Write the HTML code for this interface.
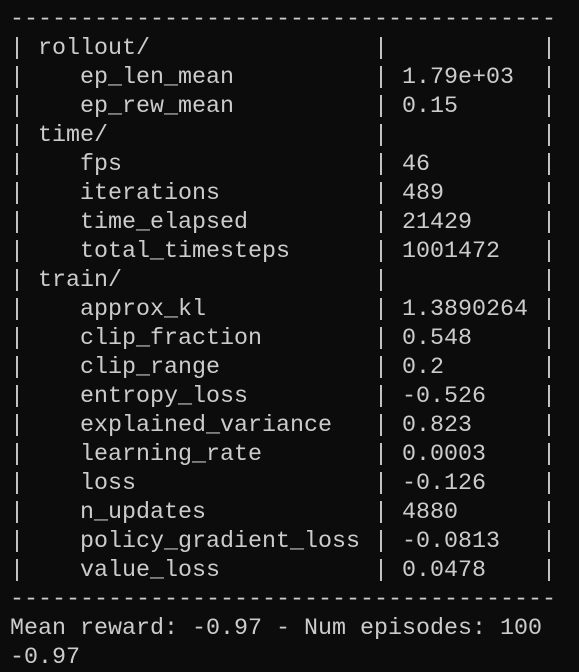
<!DOCTYPE html>
<html><head><style>
html,body{margin:0;padding:0;background:#0c0c0c;width:579px;height:672px;overflow:hidden}
pre{margin:0;padding:6px 0 0 10px;font-family:"Liberation Mono",monospace;font-size:23.33px;line-height:29px;color:#cccccc}
</style></head><body><pre>---------------------------------------
| rollout/                |           |
|    ep_len_mean          | 1.79e+03  |
|    ep_rew_mean          | 0.15      |
| time/                   |           |
|    fps                  | 46        |
|    iterations           | 489       |
|    time_elapsed         | 21429     |
|    total_timesteps      | 1001472   |
| train/                  |           |
|    approx_kl            | 1.3890264 |
|    clip_fraction        | 0.548     |
|    clip_range           | 0.2       |
|    entropy_loss         | -0.526    |
|    explained_variance   | 0.823     |
|    learning_rate        | 0.0003    |
|    loss                 | -0.126    |
|    n_updates            | 4880      |
|    policy_gradient_loss | -0.0813   |
|    value_loss           | 0.0478    |
---------------------------------------
Mean reward: -0.97 - Num episodes: 100
-0.97</pre></body></html>
